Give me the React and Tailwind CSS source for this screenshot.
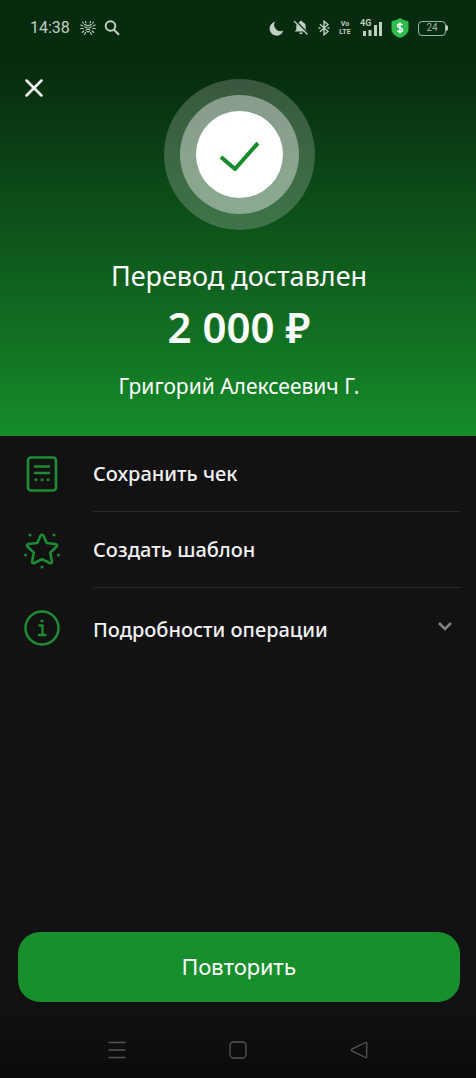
import React from 'react';

const PhoneStatus = () => (
    <div className="flex h-14 items-center justify-between pr-7 pl-[30px] text-[#bfd0c2]">
        <div className="flex items-center gap-2">
            <span className="mr-0.5 font-['Roboto',sans-serif] text-base leading-5">14:38</span>
            <svg width="16" height="16" viewBox="0 0 16 16" fill="none" stroke="currentColor" strokeWidth="1.1" strokeLinecap="round">
                <path d="M4.500 4.500l3.500 1.300 3.500-1.300M4.800 6.800l1.500 1h.8M11.200 6.800l-1.500 1h-.8M6 10l2-1 2 1M6.500 11.800h3" />
                <path d="M3 6L.8 5M3.200 8.500H.8M3.800 11l-1.600 1.500M5.500 12.500l-1 2M13 6l2.200-1M12.800 8.500h2.400M12.200 11l1.600 1.500M10.500 12.500l1 2M3.500 3.200L2.500 2M12.500 3.200l1-1.200M6 3L5.500 1.500M10 3l.5-1.500" />
            </svg>
            <svg width="16" height="16" viewBox="0 0 16 16" fill="none" stroke="currentColor" strokeWidth="2" strokeLinecap="round">
                <circle cx="6.500" cy="6" r="4.800" />
                <path d="M10 9.700l4.500 4.500" />
            </svg>
        </div>
        <div className="flex items-center gap-[9px]">
            <svg width="15" height="15" viewBox="0 0 15 15" fill="currentColor">
                <path d="M6 .8A7 7 0 1 0 14.300 9.500 6.300 6.300 0 0 1 6 .8z" />
            </svg>
            <svg width="16" height="16" viewBox="0 0 16 16" fill="currentColor">
                <path d="M8 .8c.8 0 1.300.5 1.300 1.100 2.200.6 3.400 2.200 3.400 4.300v3.200l1.600 2.200H1.700l1.600-2.200V6.200c0-2.100 1.200-3.700 3.400-4.300C6.700 1.300 7.200.8 8 .8zM6.200 12.600h3.600c-.1 1-.8 1.700-1.800 1.700s-1.700-.7-1.800-1.700z" />
                <path d="M2.500.8l13 13" stroke="#082c10" strokeWidth="1.600" />
                <path d="M1 1l13.500 13.500" stroke="currentColor" strokeWidth="1.300" />
            </svg>
            <svg width="12" height="16" viewBox="0 0 12 16" fill="none" stroke="currentColor" strokeWidth="1.400">
                <path d="M2 4.300l8 7.200L6 14.800V1.200l4 3.300-8 7.200" />
                <path d="M.5 8h2M9.500 8h2" />
            </svg>
            <span className="flex w-3 flex-col items-center font-['Roboto',sans-serif] text-[7px] leading-[8px] font-bold">
                <span>Vo</span>
                <span>LTE</span>
            </span>
            <span className="relative flex h-4 w-[22px] items-end justify-end">
                <span className="absolute -top-0.5 left-0 font-['Roboto',sans-serif] text-[9px] leading-[10px] font-bold">4G</span>
                <svg width="20" height="15" viewBox="0 0 20 15" fill="currentColor">
                    <path d="M1 10h3v5H1zM6.500 9h3v6h-3zM12 4h3v11h-3zM17 1h3v14h-3z" />
                </svg>
            </span>
            <svg width="18" height="20" viewBox="0 0 18 20">
                <path d="M9 0q4 2.500 8.500 3.200v8c0 4-3.500 6.800-8.500 8.800-5-2-8.500-4.800-8.500-8.800v-8Q5 2.500 9 0z" fill="#2dbb4e" />
                <path d="M11.500 7.200C11 6.300 10 6 9 6c-1.400 0-2.400.7-2.400 1.900 0 2.600 5 1.300 5 4 0 1.200-1.100 2-2.600 2-1.200 0-2.200-.5-2.700-1.400M9 4.500v11" fill="none" stroke="#fff" strokeWidth="1.500" />
            </svg>
            <span className="flex items-center">
                <span className="flex h-[15px] w-7 items-center justify-center rounded border border-current font-['Roboto',sans-serif] text-[10px] leading-3 text-[#9fb5a3]">24</span>
                <span className="h-1.5 w-0.5 rounded-r bg-current" />
            </span>
        </div>
    </div>
);

const ReceiptIcon = () => (
    <svg width="38" height="38" viewBox="0 0 38 38" fill="none" stroke="currentColor" strokeWidth="2.700" className="shrink-0">
        <rect x="5" y="2.500" width="28" height="33" rx="3" />
        <path d="M11 11.500h16M11 18h16" strokeWidth="2.400" />
        <g fill="currentColor" stroke="none">
            <circle cx="13" cy="24.800" r="1.500" />
            <circle cx="19" cy="24.800" r="1.500" />
            <circle cx="25" cy="24.800" r="1.500" />
        </g>
    </svg>
);

const StarIcon = () => (
    <svg width="38" height="38" viewBox="0 0 38 38" fill="none" stroke="currentColor" strokeWidth="2.600" strokeLinejoin="round" className="shrink-0">
        <path d="M17.500 4.700q1.500-2.400 3 0l3.200 7.300 8.700 1q2.800.7 1 2.700l-6.200 5.900 1.700 8.700q.2 2.600-2.300 1.700L19 28.200l-7.600 3.800q-2.500.9-2.300-1.700l1.700-8.700-6.200-5.900q-1.800-2 1-2.700l8.700-1z" />
        <g fill="currentColor" stroke="none">
            <circle cx="7" cy="4" r="1.500" />
            <circle cx="31" cy="4" r="1.500" />
            <circle cx="2.500" cy="24" r="1.500" />
            <circle cx="35.500" cy="24" r="1.500" />
            <circle cx="19" cy="36" r="1.500" />
        </g>
    </svg>
);

const InfoIcon = () => (
    <svg width="38" height="38" viewBox="0 0 38 38" fill="none" stroke="currentColor" strokeWidth="2.500" className="shrink-0">
        <circle cx="19" cy="19" r="16.500" />
        <path d="M15.500 16.500h4v9.500M15 26h8.500" strokeWidth="2.300" />
        <circle cx="19" cy="12" r="1.600" fill="currentColor" stroke="none" />
    </svg>
);

const App = () => {
    return (
        <div className="flex min-h-screen flex-col bg-[#121212] font-['Noto_Sans',sans-serif] text-white">
            <header className="bg-linear-to-b from-[#072b0e] from-15% to-[#158c2a]">
                <PhoneStatus />
                <div className="grid grid-cols-[40px_1fr_40px] items-start pt-[23px] pr-3 pl-3.5">
                    <button type="button" aria-label="Закрыть" className="flex h-[18px] w-10 items-center justify-center">
                        <svg width="18" height="18" viewBox="0 0 18 18" fill="none" stroke="currentColor" strokeWidth="2.500" strokeLinecap="round">
                            <path d="M1.500 1.500l15 15M16.500 1.500l-15 15" />
                        </svg>
                    </button>
                    <div className="mx-auto rounded-full bg-white/20 p-4">
                        <div className="rounded-full bg-white/40 p-4">
                            <div className="flex size-[87px] items-center justify-center rounded-full bg-white">
                                <svg width="40" height="32" viewBox="0 0 40 32" fill="none" stroke="#158c2a" strokeWidth="4">
                                    <path d="M2 18l14 12L39 4" />
                                </svg>
                            </div>
                        </div>
                    </div>
                </div>
                <div className="pt-7 pr-4 pb-9 pl-[18px] text-center">
                    <h1 className="text-[27px] leading-9">Перевод доставлен</h1>
                    <p className="mt-1 text-[42px] leading-[58px] font-semibold">2 000 ₽</p>
                    <p className="mt-4 text-[21px] leading-7">Григорий Алексеевич Г.</p>
                </div>
            </header>

            <main className="flex-1 pr-4 pl-[23px]">
                <button type="button" className="flex w-full items-center gap-8 text-left text-xl leading-7 font-medium text-[#f2f2f2]">
                    <span className="text-[#1f8b34]"><ReceiptIcon /></span>
                    <span className="flex h-19 flex-1 items-center border-b border-[#2a2a2a]">Сохранить чек</span>
                </button>
                <button type="button" className="flex w-full items-center gap-8 text-left text-xl leading-7 font-medium text-[#f2f2f2]">
                    <span className="text-[#1f8b34]"><StarIcon /></span>
                    <span className="flex h-19 flex-1 items-center border-b border-[#2a2a2a]">Создать шаблон</span>
                </button>
                <button type="button" aria-expanded="false" className="flex h-20 w-full items-center gap-8 text-left text-xl leading-7 font-medium text-[#f2f2f2]">
                    <span className="text-[#1f8b34]"><InfoIcon /></span>
                    <span className="flex-1 pt-1">Подробности операции</span>
                    <svg width="14" height="14" viewBox="0 0 14 14" fill="none" stroke="#858585" strokeWidth="2.500" className="mr-2">
                        <path d="M1 2l6 6 6-6" />
                    </svg>
                </button>
            </main>

            <footer className="pr-4 pl-[18px]">
                <button type="button" className="block h-[70px] w-full rounded-[22px] bg-[#178f2c] font-['Inter',sans-serif] text-[22px] leading-7">
                    Повторить
                </button>
            </footer>
            <nav className="flex h-[76px] items-center justify-around bg-linear-to-b from-[#121212] to-[#0b0b0b] pt-5 pr-14 pl-14 text-[#555]">
                <button type="button" aria-label="Недавние">
                    <svg width="18" height="18" viewBox="0 0 18 18" stroke="currentColor" strokeWidth="1.300">
                        <path d="M.5 1.500h17M.5 9h17M.5 16.500h17" />
                    </svg>
                </button>
                <button type="button" aria-label="Домой">
                    <svg width="18" height="18" viewBox="0 0 18 18" fill="none" stroke="currentColor" strokeWidth="1.300">
                        <rect x="1" y="1" width="16" height="16" rx="3.500" />
                    </svg>
                </button>
                <button type="button" aria-label="Назад">
                    <svg width="18" height="18" viewBox="0 0 18 18" fill="none" stroke="currentColor" strokeWidth="1.300" strokeLinejoin="round">
                        <path d="M15.500 1.500q1.200-.6 1.200 1v13q0 1.600-1.200 1L1.800 9.800q-1-.8 0-1.600z" />
                    </svg>
                </button>
            </nav>
        </div>
    );
};

export default App;
